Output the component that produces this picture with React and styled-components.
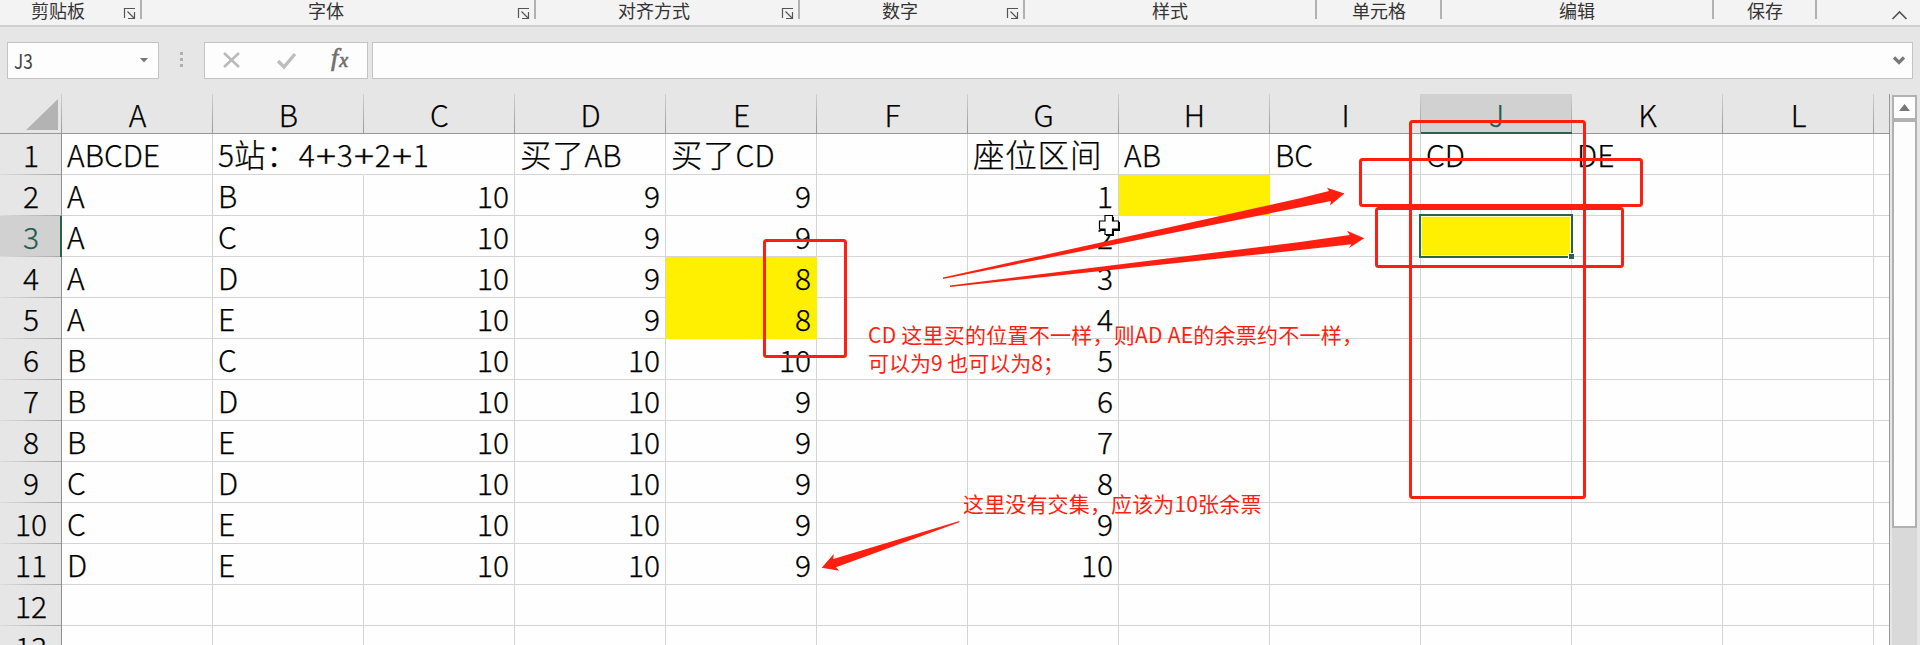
import React from "react";
import styled, { createGlobalStyle } from "styled-components";

const Global = createGlobalStyle`
  body { margin: 0; }
  p { margin: 0; }
`;

const RED = "#ff1f10";
const GREEN = "#2a6349";
const UI_FONT = `"Noto Sans CJK SC", "Noto Sans", sans-serif`;

const Page = styled.div`
  position: relative;
  width: 1920px;
  height: 645px;
  overflow: hidden;
  display: flex;
  flex-direction: column;
  background: #e6e6e6;
  font-family: ${UI_FONT};
  color: #000;
`;

const Ribbon = styled.div`
  box-sizing: border-box;
  flex: none;
  height: 27px;
  display: flex;
  align-items: flex-start;
  background: #f3f3f3;
  border-bottom: 2px solid #d0d0d0;
`;

const RibbonGroup = styled.div`
  box-sizing: border-box;
  width: ${(p) => p.$width}px;
  height: 19px;
  display: flex;
  padding-left: ${(p) => p.$inset}px;
  border-right: 2px solid #b1b1b1;
  font-size: 18px;
  line-height: 20px;
  color: #333;
  white-space: nowrap;
`;

const GroupName = styled.span`
  flex: 1;
`;

const Launcher = styled.svg`
  margin: 7px 4px 0 0;
`;

const RibbonEnd = styled.div`
  flex: 1;
  display: flex;
  justify-content: flex-end;
  padding: 10px 12px 0 0;
`;

const FormulaBar = styled.div`
  flex: none;
  height: 37px;
  padding: 15px 7px 15px 7px;
  display: flex;
`;

const Field = styled.div`
  box-sizing: border-box;
  height: 37px;
  background: #fdfdfd;
  border: 1px solid #c3c3c3;
  display: flex;
  align-items: center;
`;

const NameBox = styled(Field)`
  width: 152px;
  justify-content: space-between;
  padding: 0 10px 0 6px;
  font-size: 20px;
  line-height: 33px;
  color: #444;
`;

const NameText = styled.span`
  transform: scaleX(0.86);
  transform-origin: left;
  padding-bottom: 1px;
`;

const Grip = styled.div`
  width: 45px;
  padding: 10px 1px 0 0;
  box-sizing: border-box;
  display: flex;
  flex-direction: column;
  align-items: center;
  gap: 3px;
`;

const GripDot = styled.i`
  width: 3px;
  height: 3px;
  background: #b0b0b0;
`;

const FormulaTools = styled(Field)`
  width: 164px;
  margin-right: 4px;
`;

const ToolMarks = styled.svg`
  flex: none;
  margin-right: -4px;
`;

const FormulaInput = styled(Field)`
  flex: 1;
  justify-content: flex-end;
  padding-right: 7px;
`;

const FxLabel = styled.span`
  margin-left: 34px;
  margin-top: -3px;
  font: italic 26px/30px "Liberation Serif", serif;
  -webkit-text-stroke: 0.7px #707070;
  color: #707070;
  sub { font-size: 20px; vertical-align: -1px; margin-left: 1px; }
`;

const Workbook = styled.div`
  flex: 1;
  display: flex;
  min-height: 0;
`;

const Sheet = styled.div`
  box-sizing: border-box;
  flex: none;
  width: 1890px;
  border-right: 1px solid #999;
  overflow: hidden;
  -webkit-text-stroke: 0.25px currentColor;
`;

const Row = styled.div`
  display: grid;
  grid-template-columns: 62px repeat(12, 151px) 16px;
  grid-template-rows: 41px;
`;

const HeaderRow = styled(Row)`
  grid-template-rows: 40px;
`;

const Corner = styled.div`
  box-sizing: border-box;
  display: flex;
  justify-content: flex-end;
  padding: 5px 4px 0 0;
  background:
    linear-gradient(#979797 0 0) bottom / 100% 1px no-repeat,
    linear-gradient(#d0d0d0, #969696) right / 1px 100% no-repeat;
`;

const ColumnHead = styled.div`
  box-sizing: border-box;
  font-size: 30px;
  font-weight: 300;
  line-height: 41px;
  text-align: center;
  color: ${(p) => (p.$active ? "#215c4c" : "#000")};
  background:
    linear-gradient(${(p) => (p.$active ? `${GREEN}, ${GREEN}` : "#979797, #979797")}) bottom / 100% ${(p) => (p.$active ? 2 : 1)}px no-repeat,
    linear-gradient(#d0d0d0, #969696) right / 1px 100% no-repeat
    ${(p) => (p.$active ? "#d1d1d1" : "#e6e6e6")};
`;

const RowHead = styled.div`
  box-sizing: border-box;
  font-size: 30px;
  font-weight: 300;
  line-height: 41px;
  text-align: center;
  color: ${(p) => (p.$active ? "#215c4c" : "#000")};
  background:
    linear-gradient(${(p) => (p.$active ? GREEN : "#8f8f8f")} 0 0) right / ${(p) => (p.$active ? 2 : 1)}px 100% no-repeat,
    linear-gradient(90deg, #dcdcdc, #a6a6a6) bottom / 100% 1px no-repeat
    ${(p) => (p.$active ? "#d1d1d1" : "#e6e6e6")};
`;

const Cell = styled.div`
  box-sizing: border-box;
  min-width: 0;
  padding: 0 5px;
  font-size: 30px;
  font-weight: 300;
  line-height: 40px;
  white-space: nowrap;
  text-align: ${(p) => (p.$number ? "right" : "left")};
  background: ${(p) => (p.$fill ? "#ffef00" : "#fefefe")};
  border-right: 1px solid ${(p) => (p.$fill ? "#ffef00" : p.$spill ? "#fefefe" : "#d4d4d4")};
  border-bottom: 1px solid ${(p) => (p.$fill ? "#ffef00" : "#d4d4d4")};
`;

const SpillText = styled.span`
  position: relative;
`;

const Hanzi = styled.span`
  font-size: 31.5px;
  line-height: 1;
  letter-spacing: 0.8px;
`;

const Plus = styled.span`
  display: inline-block;
  width: 22px;
  line-height: 1;
  text-align: center;
  transform: scaleX(1.25);
`;

const ScrollBar = styled.div`
  flex: none;
  box-sizing: border-box;
  width: 28px;
  padding: 1px 0 0 2px;
  display: flex;
  flex-direction: column;
`;

const ScrollArrow = styled.div`
  box-sizing: border-box;
  width: 25px;
  height: 25px;
  flex: none;
  border: 2px solid #b1b1b1;
  background: #fdfdfd;
  display: flex;
  align-items: center;
  justify-content: center;
`;

const ScrollThumb = styled.div`
  box-sizing: border-box;
  width: 25px;
  height: 408px;
  flex: none;
  border: 2px solid #b1b1b1;
  background: #fdfdfd;
`;

const ScrollTrack = styled.div`
  width: 25px;
  flex: 1;
  background: #d9d9d9;
`;

const Selection = styled.div`
  position: absolute;
  left: 1419px;
  top: 214px;
  box-sizing: border-box;
  width: 154px;
  height: 44px;
  border: 2px solid ${GREEN};
  box-shadow: inset 0 0 0 1px #fffbc0;
`;

const FillHandle = styled.i`
  position: absolute;
  right: -3px;
  bottom: -3px;
  width: 5px;
  height: 5px;
  background: ${GREEN};
  border-left: 1px solid #fff;
  border-top: 1px solid #fff;
`;

const MarkupLayer = styled.svg`
  position: absolute;
  left: 0;
  top: 0;
`;

const Note = styled.p`
  position: absolute;
  left: ${(p) => p.$x}px;
  top: ${(p) => p.$y}px;
  font-size: 21px;
  line-height: 28px;
  color: ${RED};
  white-space: nowrap;
`;

const NoteLine = styled.span`
  display: block;
  width: max-content;
  letter-spacing: ${(p) => p.$tracking || 0}px;
`;

const groups = [
  { name: "剪贴板", width: 142, inset: 31, launcher: true },
  { name: "字体", width: 394, inset: 166, launcher: true },
  { name: "对齐方式", width: 264, inset: 82, launcher: true },
  { name: "数字", width: 225, inset: 82, launcher: true },
  { name: "样式", width: 292, inset: 127 },
  { name: "单元格", width: 125, inset: 35 },
  { name: "编辑", width: 272, inset: 117 },
  { name: "保存", width: 103, inset: 33 },
];

const columns = "ABCDEFGHIJKL".split("");

const rows = [
  ["ABCDE", "5站：4+3+2+1", "", "买了AB", "买了CD", "", "座位区间", "AB", "BC", "CD", "DE", ""],
  ["A", "B", 10, 9, 9, "", 1],
  ["A", "C", 10, 9, 9, "", 2],
  ["A", "D", 10, 9, 8, "", 3],
  ["A", "E", 10, 9, 8, "", 4],
  ["B", "C", 10, 10, 10, "", 5],
  ["B", "D", 10, 10, 9, "", 6],
  ["B", "E", 10, 10, 9, "", 7],
  ["C", "D", 10, 10, 9, "", 8],
  ["C", "E", 10, 10, 9, "", 9],
  ["D", "E", 10, 10, 9, "", 10],
  [],
  [],
];

const filled = new Set(["H2", "J3", "E4", "E5"]);

function LauncherIcon() {
  return (
    <Launcher width="13" height="13" viewBox="0 0 13 13" fill="none" stroke="#555" strokeWidth="1.2">
      <path d="M1.5 11V1.5H12M4.5 4.5L11 11M11.5 5V11.5H5" />
    </Launcher>
  );
}

function CellText({ value }) {
  if (typeof value === "number") return value;
  return value.split(/([\u4e00-\u9fff：]+|\+)/).map((part, i) => {
    if (part === "+") return <Plus key={i}>+</Plus>;
    return i % 2 ? <Hanzi key={i}>{part}</Hanzi> : part;
  });
}

function SheetRow({ index, values }) {
  const number = index + 1;
  return (
    <Row>
      <RowHead $active={number === 3}>{number}</RowHead>
      {columns.map((letter, i) => {
        const value = values[i] ?? "";
        const spill = number === 1 && letter === "B";
        const text = <CellText value={value} />;
        return (
          <Cell
            key={letter}
            $number={typeof value === "number"}
            $fill={filled.has(letter + number)}
            $spill={spill}
          >
            {spill ? <SpillText>{text}</SpillText> : text}
          </Cell>
        );
      })}
      <Cell />
    </Row>
  );
}

export default function App() {
  return (
    <Page>
      <Global />
      <Ribbon>
        {groups.map((g) => (
          <RibbonGroup key={g.name} $width={g.width} $inset={g.inset}>
            <GroupName>{g.name}</GroupName>
            {g.launcher && <LauncherIcon />}
          </RibbonGroup>
        ))}
        <RibbonEnd>
          <svg width="17" height="11" viewBox="0 0 17 11" fill="none" stroke="#555" strokeWidth="1.7">
            <path d="M1.5 9L8.5 2L15.5 9" />
          </svg>
        </RibbonEnd>
      </Ribbon>

      <FormulaBar>
        <NameBox>
          <NameText>J3</NameText>
          <svg width="8" height="5" viewBox="0 0 8 5">
            <path d="M0 0H8L4 4.5Z" fill="#777" />
          </svg>
        </NameBox>
        <Grip>
          <GripDot />
          <GripDot />
          <GripDot />
        </Grip>
        <FormulaTools>
          <ToolMarks width="96" height="35" viewBox="0 0 96 35" fill="none">
            <path d="M19 10L34 24M34 10L19 24" stroke="#b9b9b9" strokeWidth="2.5" />
            <path d="M73 18L79 24L90 11" stroke="#bdbdbd" strokeWidth="3.4" />
          </ToolMarks>
          <FxLabel>
            f<sub>x</sub>
          </FxLabel>
        </FormulaTools>
        <FormulaInput>
          <svg width="12" height="9" viewBox="0 0 12 9" fill="none" stroke="#777" strokeWidth="3.2">
            <path d="M1 1.5L6 6.5L11 1.5" />
          </svg>
        </FormulaInput>
      </FormulaBar>

      <Workbook>
        <Sheet>
          <HeaderRow>
            <Corner>
              <svg width="32" height="32" viewBox="0 0 32 32">
                <path d="M32 0V31H0Z" fill="#b3b3b3" />
              </svg>
            </Corner>
            {columns.map((c) => (
              <ColumnHead key={c} $active={c === "J"}>
                {c}
              </ColumnHead>
            ))}
            <ColumnHead />
          </HeaderRow>
          {rows.map((values, i) => (
            <SheetRow key={i} index={i} values={values} />
          ))}
        </Sheet>
        <ScrollBar>
          <ScrollArrow>
            <svg width="11" height="7" viewBox="0 0 11 7">
              <path d="M0 7L5.5 0L11 7Z" fill="#777" />
            </svg>
          </ScrollArrow>
          <ScrollThumb />
          <ScrollTrack />
        </ScrollBar>
      </Workbook>

      <Selection>
        <FillHandle />
      </Selection>

      <MarkupLayer width="1920" height="645" viewBox="0 0 1920 645">
        <path d="M1106 217H1114V222H1120V231H1114V236H1106V231H1101V222H1106Z" fill="#000" />
        <path
          d="M1105 215.5H1112.5V221H1118.5V229H1112.5V234.5H1105V229H1099.5V221H1105Z"
          fill="#fff"
          stroke="#000"
          strokeWidth="1.2"
        />
        <g fill="none" stroke={RED} strokeWidth="3">
          <rect x="764.5" y="240.5" width="81" height="116" rx="2" />
          <rect x="1410.5" y="121.5" width="174" height="376" rx="2" />
          <rect x="1360.5" y="159.5" width="281" height="46" rx="2" />
          <rect x="1376.5" y="208.5" width="246" height="58" rx="2" />
        </g>
        <g fill={RED}>
          <path d="M943 277.5L1300 198.3L1329 191L1327 187.8L1344.5 193.5L1330 205.5L1331 201L1300 207.3L943 279Z" />
          <path d="M950 285.5L1300 242L1349.7 235L1347 230.7L1364.3 238.3L1349 248L1351.3 244.3L1300 250L950 287Z" />
          <path d="M959.3 521L833.3 559L833.7 554L821.7 567.7L839.3 570.7L836 567.3L959.3 522.3Z" />
        </g>
      </MarkupLayer>

      <Note $x={868} $y={320}>
        <NoteLine $tracking={0.25}>CD 这里买的位置不一样，则AD AE的余票约不一样，</NoteLine>
        <NoteLine>可以为9 也可以为8；</NoteLine>
      </Note>
      <Note $x={963} $y={489}>
        <NoteLine $tracking={0.15}>这里没有交集，应该为10张余票</NoteLine>
      </Note>
    </Page>
  );
}
